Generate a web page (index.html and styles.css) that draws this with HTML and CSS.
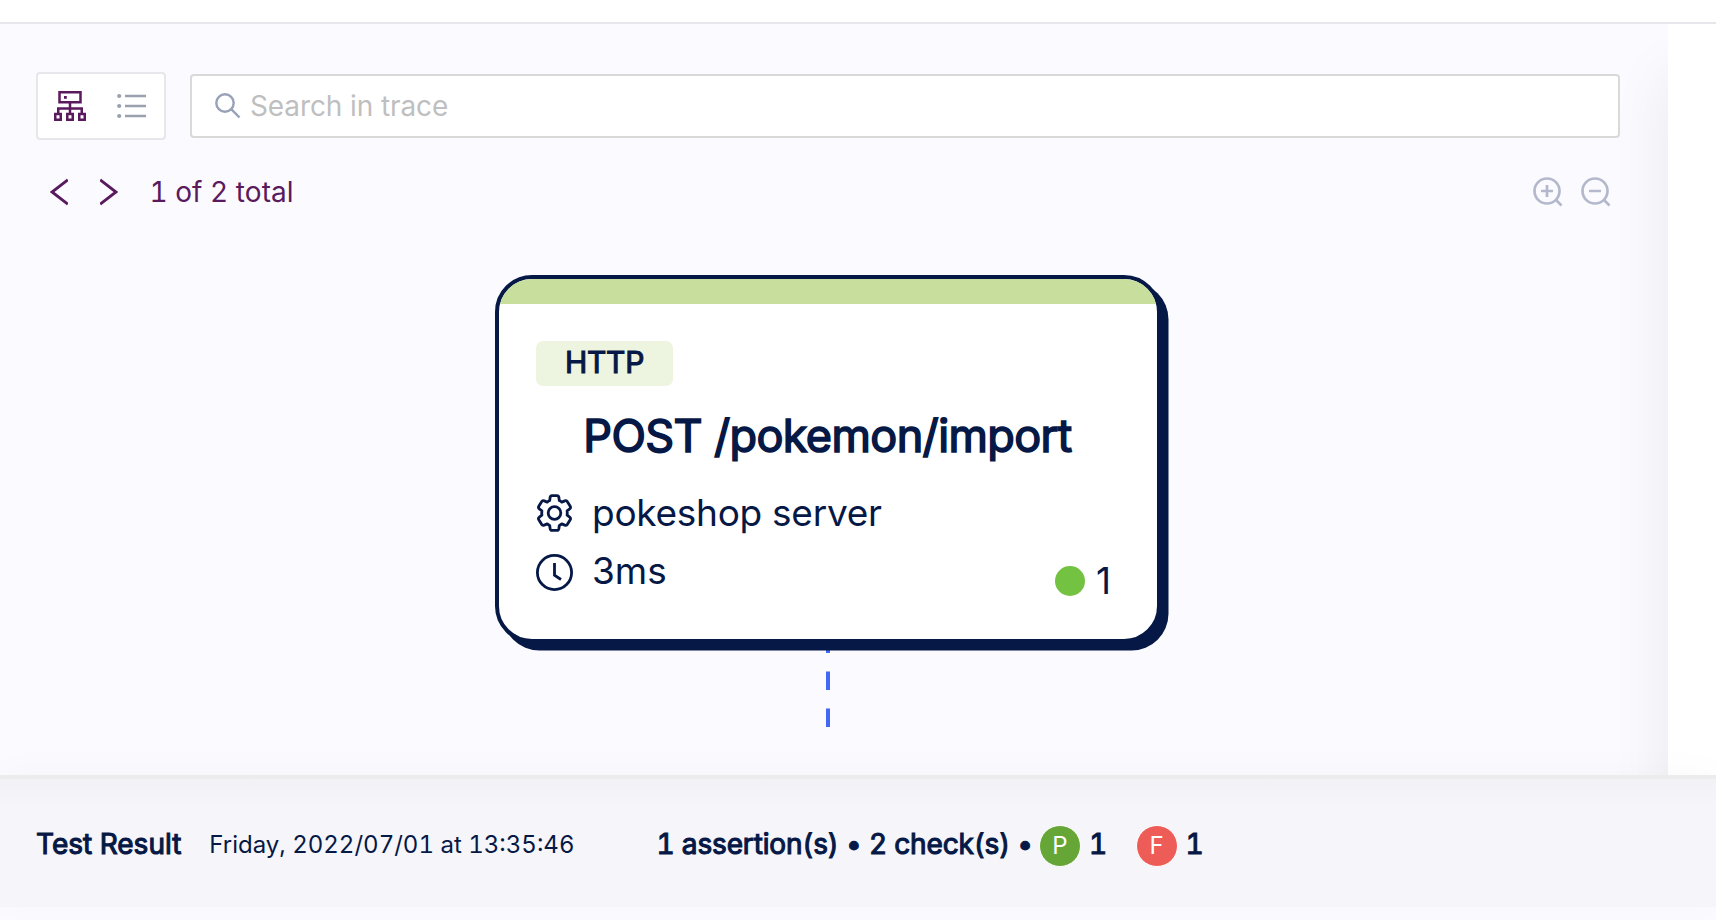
FILE: index.html
```html
<!DOCTYPE html>
<html lang="en">
<head>
<meta charset="utf-8">
<title>Trace</title>
<link rel="stylesheet" href="styles.css">
</head>
<body>
<div class="app">
  <header class="topbar"></header>
  <div class="workspace">
    <main class="trace">
      <div class="toolbar">
        <div class="view-switch">
          <svg class="icon-tree" width="32" height="30" viewBox="0 0 32 30" fill="none" stroke="#5a1a5e" stroke-width="2.500"><path d="M5.500 1.250H26.500V11.250H5.500ZM16 11V23M4.250 23V17.500H27.750V23M1.250 23H6.750V28.750H1.250ZM13.250 23H18.750V28.750H13.250ZM25.250 23H30.750V28.750H25.250Z"/><rect x="10" y="5" width="2.800" height="2.800" fill="#5a1a5e" stroke="none"/></svg>
          <svg class="icon-list" width="30" height="26" viewBox="0 0 30 26"><g fill="#98a1ad"><circle cx="2.200" cy="3" r="2.100"/><circle cx="2.200" cy="13" r="2.100"/><circle cx="2.200" cy="23" r="2.100"/></g><path d="M8 3H29M8 13H29M8 23H29" stroke="#98a1ad" stroke-width="2.600"/></svg>
        </div>
        <div class="search">
          <svg width="26" height="26" viewBox="0 0 26 26" fill="none" stroke="#98a1b8" stroke-width="2.400"><circle cx="10" cy="10" r="8.700"/><path d="M16.200 16.200L24.500 24.500"/></svg>
          <span class="placeholder">Search in trace</span>
        </div>
      </div>
      <div class="pager">
        <svg width="18" height="28" viewBox="0 0 18 28" fill="none" stroke="#5a1a5e" stroke-width="2.900"><path d="M17.800 1.800L2 14L17.800 26.200"/></svg>
        <svg width="18" height="28" viewBox="0 0 18 28" fill="none" stroke="#5a1a5e" stroke-width="2.900"><path d="M.2 1.800L16 14L.2 26.200"/></svg>
        <span class="count">1 of 2 total</span>
        <span class="zoom">
          <svg width="30" height="30" viewBox="0 0 30 30" fill="none" stroke="#b3b8cc" stroke-width="2.700"><circle cx="14" cy="14" r="12.500"/><path d="M8 14H20M14 8V20M22.500 22.500L28.500 28.500"/></svg>
          <svg width="30" height="30" viewBox="0 0 30 30" fill="none" stroke="#b3b8cc" stroke-width="2.700"><circle cx="14" cy="14" r="12.500"/><path d="M8 14H20M22.500 22.500L28.500 28.500"/></svg>
        </span>
      </div>
      <div class="canvas">
        <svg class="edge" width="4" height="86" viewBox="0 0 4 86"><path d="M2 0V12M2 30.500V49M2 67.500V86" stroke="#4169f5" stroke-width="4"/></svg>
        <article class="node">
          <div class="band"></div>
          <div class="node-body">
            <span class="tag">HTTP</span>
            <h2 class="title">POST /pokemon/import</h2>
            <div class="line service">
              <svg width="37" height="38" viewBox="-18.500 -19 37 38" fill="none" stroke="#061845" stroke-width="2.800" stroke-linejoin="round"><circle r="6.300"/><path d="M-4.400 -15.500Q-4.100 -17.400 -2.500 -17.400H2.500Q4.100 -17.400 4.400 -15.500L4.800 -12.500Q6 -12 7.300 -10.900L10.300 -12.100Q12.100 -12.800 12.900 -11.300L15.700 -6.700Q16.600 -5.200 15.200 -4.100L12.600 -2.100Q12.900 0 12.600 2.100L15.200 4.100Q16.600 5.200 15.700 6.700L12.900 11.300Q12.100 12.800 10.300 12.100L7.300 10.900Q6 12 4.800 12.500L4.400 15.500Q4.100 17.400 2.500 17.400H-2.500Q-4.100 17.400 -4.400 15.500L-4.800 12.500Q-6 12 -7.300 10.900L-10.300 12.100Q-12.100 12.800 -12.900 11.300L-15.700 6.700Q-16.600 5.200 -15.200 4.100L-12.600 2.100Q-12.900 0 -12.600 -2.100L-15.200 -4.100Q-16.600 -5.200 -15.700 -6.700L-12.900 -11.300Q-12.100 -12.800 -10.300 -12.100L-7.300 -10.900Q-6 -12 -4.800 -12.500Z"/></svg>
              <span class="service-name">pokeshop server</span>
            </div>
            <div class="line duration">
              <svg width="37" height="37" viewBox="0 0 37 37" fill="none" stroke="#061845" stroke-width="2.800"><circle cx="18.500" cy="18.500" r="17.100"/><path d="M18.500 9V21.200L25 25.500"/></svg>
              <span class="time">3ms</span>
              <span class="checks"><i class="dot"></i><span class="passed">1</span></span>
            </div>
          </div>
        </article>
      </div>
    </main>
    <aside class="side"></aside>
  </div>
  <footer class="result">
    <strong class="name">Test Result</strong>
    <span class="date">Friday, 2022/07/01 at 13:35:46</span>
    <strong class="summary">1 assertion(s) • 2 check(s) •</strong>
    <span class="badge pass">P</span><strong class="num">1</strong>
    <span class="badge fail">F</span><strong class="num">1</strong>
  </footer>
</div>
</body>
</html>
```
FILE: styles.css
```css
* { box-sizing: border-box; }
body { margin: 0; background: #fbfbff; font-family: Inter, "Liberation Sans", sans-serif; color: #061845; }
svg { display: block; flex: none; }
.app { height: 920px; display: flex; flex-direction: column; overflow: hidden; white-space: nowrap; }
.topbar { height: 24px; flex: none; background: #fff; border-bottom: 2px solid #e6e6eb; }
.workspace { height: 751px; flex: none; display: flex; overflow: hidden; }
.trace { width: 1668px; background: #fbfbff; display: flex; flex-direction: column; }
.side { flex: 1; background: #fff; box-shadow: 0 50px 60px rgba(0, 0, 0, .08); }

.toolbar { display: flex; align-items: center; gap: 24px; padding: 48px 48px 0 36px; }
.view-switch { width: 130px; height: 68px; display: flex; align-items: center; gap: 31px; padding-left: 16px; background: #fff; border: 2px solid #e6e6eb; border-radius: 4px; }
.search { flex: 1; height: 64px; display: flex; align-items: center; gap: 9px; padding-left: 23px; background: #fff; border: 2px solid #d9d9d9; border-radius: 4px; position: relative; }
.placeholder { font-size: 28px; line-height: 40px; letter-spacing: -.1px; color: #bfbfbf; }

.pager { height: 40px; margin-top: 32px; padding: 0 57px 0 50px; display: flex; align-items: center; color: #5a1a5e; }
.pager > svg + svg { margin-left: 32px; }
.count { margin-left: 31.500px; font-size: 28px; line-height: 40px; letter-spacing: .05px; font-variant-numeric: tabular-nums; }
.zoom { margin-left: auto; display: flex; gap: 18px; }

.canvas { flex: 1; position: relative; }
.edge { position: absolute; left: 826px; top: 429px; }
.node { position: absolute; left: 495px; top: 62.500px; width: 666px; height: 368.500px; border: 4px solid #061845; border-radius: 37px; background: #fff; box-shadow: 7.500px 7.500px 0 #061845; overflow: hidden; }
.band { height: 25.500px; background: #c8de9c; }
.node-body { padding: 37px 46px 0 37px; display: flex; flex-direction: column; }
.tag { width: 137px; height: 44.500px; border-radius: 7px; background: #edf5e0; text-align: center; font-size: 30px; line-height: 43px; letter-spacing: -.3px; -webkit-text-stroke: 1.100px #061845; }
.title { margin: 20px -8px 0 0; font-size: 45px; line-height: 60px; font-weight: 400; letter-spacing: -.62px; text-align: center; -webkit-text-stroke: 1.600px #061845; }
.line { display: flex; align-items: center; gap: 19px; font-size: 37px; line-height: 44px; }
.service { margin-top: 25.500px; }
.service-name { letter-spacing: -.27px; }
.duration { margin-top: 15px; }
.time { position: relative; top: -1px; }
.checks { margin-left: auto; display: flex; align-items: center; gap: 11px; position: relative; top: 9px; }
.dot { width: 30px; height: 30px; border-radius: 50%; background: #73c241; }

.result { height: 132px; flex: none; display: flex; align-items: center; padding: 4px 0 0 36px; border-top: 4px solid #ececec; background: linear-gradient(#f2f2f6, #f5f5fa 27px); box-shadow: 0 -4px 36px rgba(0, 0, 0, .025); z-index: 1; }
.result strong { font-size: 28px; line-height: 40px; font-weight: 400; -webkit-text-stroke: 1.100px #061845; font-variant-numeric: tabular-nums; position: relative; top: -1px; }
.date { margin-left: 28px; font-size: 24px; line-height: 40px; font-variant-numeric: tabular-nums; }
.result .summary { margin-left: 82px; letter-spacing: -.15px; }
.badge { width: 42px; height: 42px; margin-top: 1px; border: 1px solid #fff; border-radius: 50%; color: #fff; text-align: center; font-size: 24px; line-height: 40px; }
.pass { margin-left: 6px; background: #66a636; }
.fail { margin-left: 28.500px; background: #ee5c57; }
.result .num { margin-left: 8px; }
```
